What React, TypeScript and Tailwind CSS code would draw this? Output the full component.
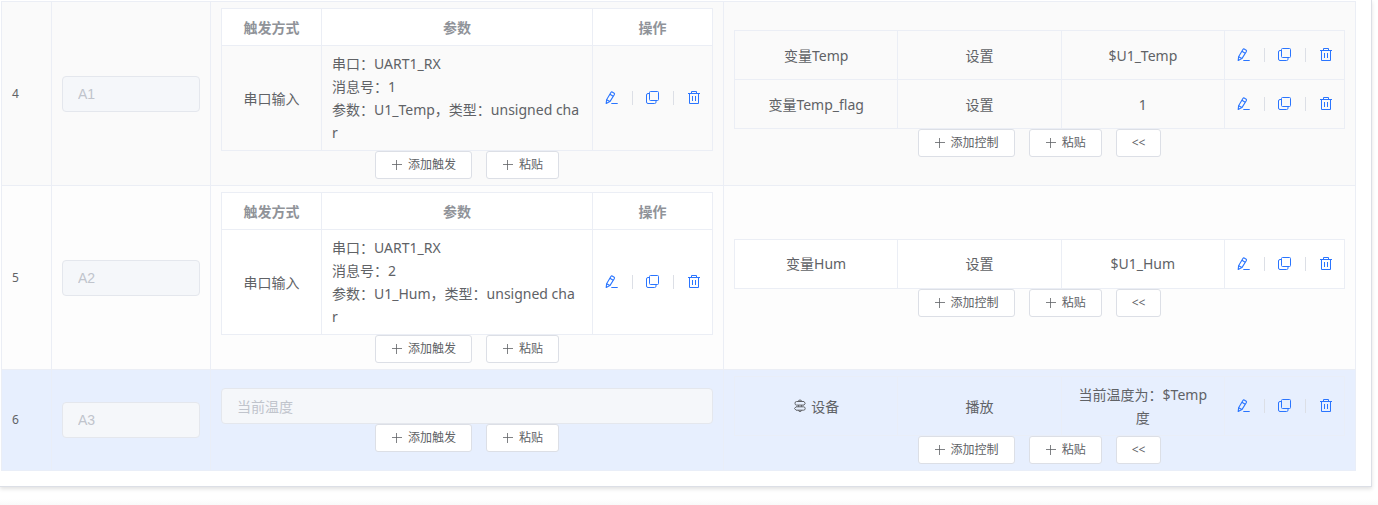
import type { ReactNode } from "react";

type Trigger = { way: string; params: string };

type Control = { target: string; action: string; value: string; device?: boolean };

type Row = {
  id: number;
  name: string;
  bg: string;
  tableBg: string;
  line: string;
  triggers: Trigger[];
  keyword?: string;
  controls: Control[];
};

const ROWS: Row[] = [
  {
    id: 4,
    name: "A1",
    bg: "bg-[#fafafa]",
    tableBg: "bg-[#fafafa]",
    line: "border-[#ebeef5]",
    triggers: [
      { way: "串口输入", params: "串口：UART1_RX\n消息号：1\n参数：U1_Temp，类型：unsigned cha\nr" },
    ],
    controls: [
      { target: "变量Temp", action: "设置", value: "$U1_Temp" },
      { target: "变量Temp_flag", action: "设置", value: "1" },
    ],
  },
  {
    id: 5,
    name: "A2",
    bg: "bg-[#fdfdfd]",
    tableBg: "bg-white",
    line: "border-[#ebeef5]",
    triggers: [
      { way: "串口输入", params: "串口：UART1_RX\n消息号：2\n参数：U1_Hum，类型：unsigned cha\nr" },
    ],
    controls: [{ target: "变量Hum", action: "设置", value: "$U1_Hum" }],
  },
  {
    id: 6,
    name: "A3",
    bg: "bg-[#e7effe]",
    tableBg: "bg-[#e7effe]",
    line: "border-[#e9eef8]",
    triggers: [],
    keyword: "当前温度",
    controls: [{ target: "设备", action: "播放", value: "当前温度为：$Temp度", device: true }],
  },
];

function EditIcon() {
  return (
    <svg viewBox="0 0 14 14" className="w-3.5 h-3.5" fill="none" stroke="currentColor" strokeWidth="1.1" strokeLinejoin="round">
      <path d="M1.2 12.5 1.6 8.8 5.9 1.5Q6.4.7 7.2 1L9.2 2.2Q9.8 2.7 9.4 3.5L4.9 10.6Z" />
      <path d="M4.9 3.3 8.2 5.3M1.6 8.8 4.9 10.6M6.3 12.5h6.4" />
    </svg>
  );
}

function CopyIcon() {
  return (
    <svg viewBox="0 0 14 14" className="w-3.5 h-3.5" fill="none" stroke="currentColor">
      <rect x="3.5" y="0.5" width="9" height="9" rx="1" />
      <path d="M3.5 2.5H2Q.5 2.5 .5 4V11Q.5 12.5 2 12.5H8.5Q10 12.5 10 11.2V9.5" />
    </svg>
  );
}

function DeleteIcon() {
  return (
    <svg viewBox="0 0 14 14" className="w-3.5 h-3.5" fill="none" stroke="currentColor">
      <path d="M1 2.5H13M4.5 2.5V.5H9.5V2.5M2.5 2.5V12.5H11.5V2.5M5.5 5V10M8.5 5V10" />
    </svg>
  );
}

function PlusIcon() {
  return (
    <svg viewBox="0 0 12 12" className="w-3 h-3" fill="none" stroke="currentColor">
      <path d="M1 5.5H11M5.5 1V11" strokeWidth="0.8" />
    </svg>
  );
}

function GuideIcon() {
  return (
    <svg viewBox="0 0 14 14" className="w-3.5 h-3.5" fill="none" stroke="currentColor" strokeLinejoin="round">
      <path d="M5.3 2.5Q5.3 1 7 1T8.7 2.5M3.5 2.5H11L12.2 4.3 11 6.1H3.5Q2 6.1 2 4.3T3.5 2.5ZM5.5 6.1V7.8M8.5 6.1V7.8M3 7.8H10.5Q12.2 7.8 12.2 9.5T10.5 11.2H3L1.5 9.5ZM5.5 11.2Q5.5 12.5 7 12.5T8.5 11.2" />
    </svg>
  );
}

function MiniButton({ plus = true, children }: { plus?: boolean; children: ReactNode }) {
  return (
    <button
      type="button"
      className="h-7 px-[15px] flex items-center gap-[5px] rounded-[3px] border border-[#dcdfe6] bg-white text-xs leading-3 text-[#606266] hover:text-[#2a75ff]"
    >
      {plus && <PlusIcon />}
      {children}
    </button>
  );
}

function Actions() {
  return (
    <div className="flex items-center gap-[13px] pl-3 text-[#2a75ff]">
      <button type="button" aria-label="编辑">
        <EditIcon />
      </button>
      <span className="w-px h-3.5 bg-[#dcdfe6]" />
      <button type="button" aria-label="复制">
        <CopyIcon />
      </button>
      <span className="w-px h-3.5 bg-[#dcdfe6]" />
      <button type="button" aria-label="删除">
        <DeleteIcon />
      </button>
    </div>
  );
}

function DisabledInput({ label, value }: { label: string; value: string }) {
  return (
    <input
      disabled
      aria-label={label}
      value={value}
      className="block w-full h-9 px-[15px] rounded border border-[#e4e7ed] bg-[#f5f7fa] text-sm text-[#c0c4cc] font-['Liberation_Sans','Noto_Sans_CJK_SC',sans-serif]"
    />
  );
}

function TriggerTable({ row }: { row: Row }) {
  const cell = `border-r border-b ${row.line}`;
  return (
    <table className={`w-full table-fixed border-separate border-spacing-0 border-t border-l ${row.line} ${row.tableBg}`}>
      <thead className="bg-white text-[#909399]">
        <tr className="h-[37px]">
          <th className={`w-[100px] ${cell}`}>触发方式</th>
          <th className={cell}>参数</th>
          <th className={`w-[120px] ${cell}`}>操作</th>
        </tr>
      </thead>
      <tbody>
        {row.triggers.map((t) => (
          <tr key={t.params}>
            <td className={`text-center ${cell}`}>{t.way}</td>
            <td className={`px-2.5 py-1.5 whitespace-pre-line ${cell}`}>{t.params}</td>
            <td className={cell}>
              <Actions />
            </td>
          </tr>
        ))}
      </tbody>
    </table>
  );
}

function ControlTable({ row }: { row: Row }) {
  const cell = `border-r border-b ${row.line}`;
  return (
    <table className={`w-full table-fixed border-separate border-spacing-0 border-t border-l ${row.line} ${row.tableBg}`}>
      <colgroup>
        <col />
        <col />
        <col />
        <col className="w-[120px]" />
      </colgroup>
      <tbody>
        {row.controls.map((c) => (
          <tr key={c.target} className="h-[49px] text-center">
            <td className={`px-2.5 py-1.5 ${cell}`}>
              <div className="flex items-center justify-center gap-1">
                {c.device && <GuideIcon />}
                {c.target}
              </div>
            </td>
            <td className={`px-2.5 py-1.5 ${cell}`}>{c.action}</td>
            <td className={`px-2.5 py-1.5 break-all ${cell}`}>{c.value}</td>
            <td className={cell}>
              <Actions />
            </td>
          </tr>
        ))}
      </tbody>
    </table>
  );
}

export default function App() {
  return (
    <div className="bg-white font-['Noto_Sans','Noto_Sans_CJK_SC',sans-serif] text-sm leading-[23px] text-[#606266]">
      <div className="mr-1.5 pt-px pl-px pr-[15px] pb-[15px] border-r border-b border-[#dcdfe6] shadow-[0_2px_4px_rgba(0,0,0,0.12)]">
        <table className="w-full table-fixed border-separate border-spacing-0 border-t border-l border-[#ebeef5]">
          <colgroup>
            <col className="w-[50px]" />
            <col className="w-[159px]" />
            <col className="w-[513px]" />
            <col />
          </colgroup>
          <tbody>
            {ROWS.map((row) => {
              const cell = `px-2.5 py-1.5 border-r border-b ${row.line}`;
              return (
                <tr key={row.id} className={row.bg}>
                  <td className={`text-xs ${cell}`}>{row.id}</td>
                  <td className={cell}>
                    <DisabledInput label="名称" value={row.name} />
                  </td>
                  <td className={cell}>
                    {row.keyword ? <DisabledInput label="触发词" value={row.keyword} /> : <TriggerTable row={row} />}
                    <div className="flex justify-center gap-3.5">
                      <MiniButton>添加触发</MiniButton>
                      <MiniButton>粘贴</MiniButton>
                    </div>
                  </td>
                  <td className={cell}>
                    <ControlTable row={row} />
                    <div className="flex justify-center gap-3.5">
                      <MiniButton>添加控制</MiniButton>
                      <MiniButton>粘贴</MiniButton>
                      <MiniButton plus={false}>&lt;&lt;</MiniButton>
                    </div>
                  </td>
                </tr>
              );
            })}
          </tbody>
        </table>
      </div>
      <div className="mt-3 h-1.5 bg-linear-to-b from-white to-[#f9f9f9]" />
    </div>
  );
}
